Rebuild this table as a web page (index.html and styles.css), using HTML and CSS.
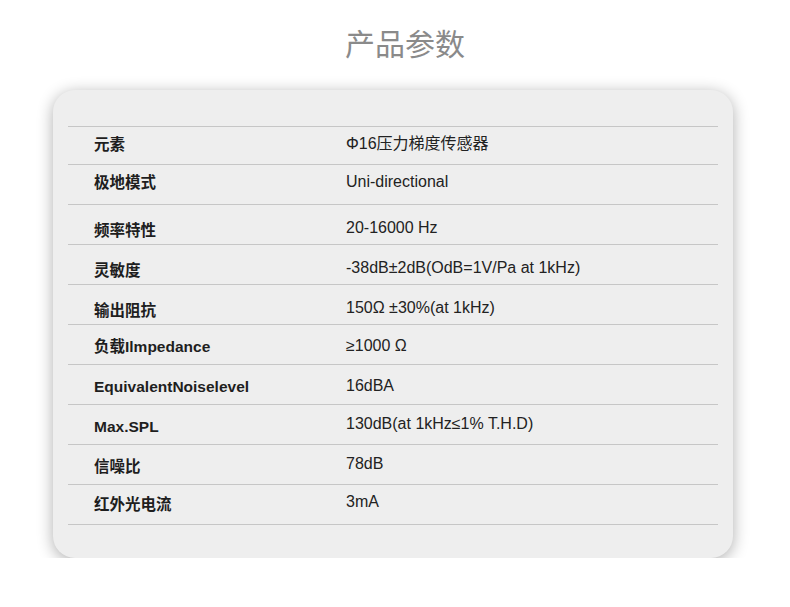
FILE: index.html
```html
<!DOCTYPE html>
<html lang="zh">
<head>
<meta charset="utf-8">
<title>产品参数</title>
<link rel="stylesheet" href="styles.css">
</head>
<body>
<h1 class="title">产品参数</h1>
<section class="card">
  <div class="specs">
    <div class="row row--first row--a"><div class="label">元素</div><div class="value">Φ16压力梯度传感器</div></div>
    <div class="row row--a"><div class="label">极地模式</div><div class="value">Uni-directional</div></div>
    <div class="row row--b"><div class="label">频率特性</div><div class="value">20-16000 Hz</div></div>
    <div class="row row--b"><div class="label">灵敏度</div><div class="value">-38dB±2dB(OdB=1V/Pa at 1kHz)</div></div>
    <div class="row row--b"><div class="label">输出阻抗</div><div class="value">150Ω ±30%(at 1kHz)</div></div>
    <div class="row row--c"><div class="label">负载Ilmpedance</div><div class="value">≥1000 Ω</div></div>
    <div class="row row--c"><div class="label">EquivalentNoiselevel</div><div class="value">16dBA</div></div>
    <div class="row row--d"><div class="label">Max.SPL</div><div class="value">130dB(at 1kHz≤1% T.H.D)</div></div>
    <div class="row row--d"><div class="label">信噪比</div><div class="value">78dB</div></div>
    <div class="row row--last row--e"><div class="label">红外光电流</div><div class="value">3mA</div></div>
  </div>
</section>
</body>
</html>
```

FILE: styles.css
```css
html, body {
  margin: 0;
  padding: 0;
  background: #ffffff;
}

body {
  width: 790px;
  font-family: "Liberation Sans", "Noto Sans CJK SC", sans-serif;
  color: #1c1c1c;
}

.title {
  margin: 0;
  padding: 22px 0 0 20px;
  height: 68px;
  box-sizing: border-box;
  text-align: center;
  font-family: "Noto Sans CJK SC", sans-serif;
  font-weight: 400;
  font-size: 30px;
  line-height: 40px;
  color: #8a8a8a;
}

.card {
  margin: 22px 0 0 53px;
  width: 680px;
  box-sizing: border-box;
  padding: 36px 15px 33px 15px;
  background: #eeeeee;
  border-radius: 22px;
  box-shadow: 0 3px 16px rgba(0, 0, 0, 0.32);
}

.row {
  display: flex;
  height: 40px;
  box-sizing: border-box;
  border-top: 1px solid #c6c6c6;
}

.row--first {
  height: 38px;
}

.row--last {
  height: 41px;
  border-bottom: 1px solid #c6c6c6;
}

.label {
  width: 252px;
  margin-left: 26px;
  font-family: "Liberation Sans", "Noto Sans CJK SC", sans-serif;
  font-weight: 700;
  font-size: 15.5px;
  line-height: 20px;
  color: #1e1e1e;
}

.value {
  font-size: 16px;
  line-height: 20px;
  color: #222222;
}

.row--a .label { padding-top: 8px; }
.row--a .value { padding-top: 7px; }
.row--b .label { padding-top: 16px; }
.row--b .value { padding-top: 13px; }
.row--c .label { padding-top: 12px; }
.row--c .value { padding-top: 11px; }
.row--d .label { padding-top: 12px; }
.row--d .value { padding-top: 9px; }
.row--e .label { padding-top: 10px; }
.row--e .value { padding-top: 7px; }
```
